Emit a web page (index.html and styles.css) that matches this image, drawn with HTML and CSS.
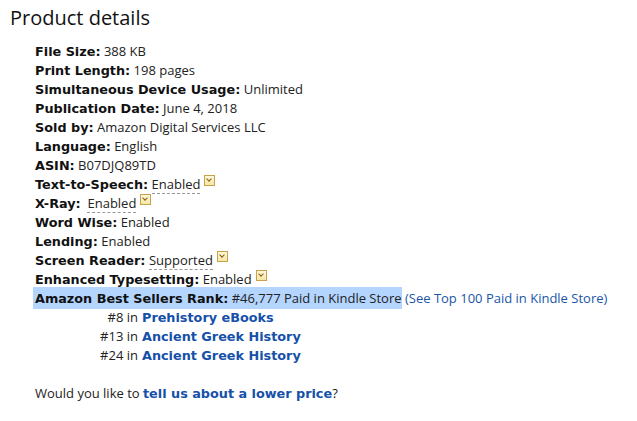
FILE: index.html
```html
<!DOCTYPE html>
<html>
<head>
<meta charset="utf-8">
<link rel="stylesheet" href="styles.css">
</head>
<body>
<h1 class="title">Product details</h1>
<ul class="details">
  <li><b class="lbl">File Size:</b> 388 KB</li>
  <li><b class="lbl">Print Length:</b> 198 pages</li>
  <li><b class="lbl">Simultaneous Device Usage:</b> Unlimited</li>
  <li><b class="lbl">Publication Date:</b> June 4, 2018</li>
  <li><b class="lbl">Sold by:</b> Amazon Digital Services LLC</li>
  <li><b class="lbl">Language:</b> English</li>
  <li><b class="lbl">ASIN:</b> B07DJQ89TD</li>
  <li><b class="lbl">Text-to-Speech:</b> <span class="dash">Enabled</span><span class="pop"></span></li>
  <li><b class="lbl">X-Ray:</b>&nbsp; <span class="dash">Enabled</span><span class="pop"></span></li>
  <li><b class="lbl">Word Wise:</b> Enabled</li>
  <li><b class="lbl">Lending:</b> Enabled</li>
  <li><b class="lbl">Screen Reader:</b> <span class="dash">Supported</span><span class="pop"></span></li>
  <li><b class="lbl">Enhanced Typesetting:</b> <span class="dash">Enabled</span><span class="pop"></span></li>
  <li><span class="sel"><b class="lbl">Amazon Best Sellers Rank:</b> #46,777 Paid in Kindle Store</span> <a class="link">(See Top 100 Paid in Kindle Store)</a>
    <ul class="ranks">
      <li><span class="num">#8 in</span> <a class="blink">Prehistory eBooks</a></li>
      <li><span class="num">#13 in</span> <a class="blink">Ancient Greek History</a></li>
      <li><span class="num">#24 in</span> <a class="blink">Ancient Greek History</a></li>
    </ul>
  </li>
</ul>
<p class="lower">Would you like to <a class="blink">tell us about a lower price</a>?</p>
</body>
</html>
```
FILE: styles.css
```css
html, body {
  margin: 0;
  padding: 0;
  background: #fff;
}
body {
  font-family: "Open Sans", "Liberation Sans", sans-serif;
  font-size: 13px;
  color: #222;
}
.title {
  margin: 0;
  padding: 3px 0 0 10px;
  font-family: "Open Sans", sans-serif;
  font-weight: 400;
  font-size: 20px;
  line-height: 30px;
  color: #111;
}
.details {
  list-style: none;
  margin: 9px 0 0 0;
  padding: 0 0 0 35px;
}
.details > li {
  line-height: 19px;
  height: 19px;
  white-space: nowrap;
}
.lbl {
  font-family: "DejaVu Sans", Verdana, sans-serif;
  font-weight: 700;
  font-size: 12.8px;
  color: #111;
}
.dash {
  border-bottom: 1px dashed #999;
}
.pop {
  display: inline-block;
  width: 9px;
  height: 9px;
  margin-left: 4px;
  vertical-align: text-top;
  border: 1px solid #c8a24a;
  background: linear-gradient(#fff9da, #f4e7a8);
  position: relative;
}
.pop::after {
  content: "";
  position: absolute;
  left: 2px;
  top: 1px;
  width: 3px;
  height: 3px;
  border-right: 1.3px solid #8a5a10;
  border-bottom: 1.3px solid #8a5a10;
  transform: rotate(45deg);
}
.sel {
  background: #b4d5fe;
  margin-left: -2px;
  padding: 2px 0 2px 2px;
}
.link {
  color: #1a55a8;
}
.blink {
  color: #1550a9;
  font-family: "DejaVu Sans", Verdana, sans-serif;
  font-weight: 700;
  font-size: 12.8px;
}
.details > li:last-child {
  height: auto;
}
.ranks {
  list-style: none;
  margin: 0;
  padding: 0;
}
.ranks li {
  line-height: 19px;
  display: flex;
  gap: 4px;
}
.num {
  width: 103px;
  text-align: right;
}
.lower {
  margin: 19px 0 0 35px;
  line-height: 19px;
}
```
